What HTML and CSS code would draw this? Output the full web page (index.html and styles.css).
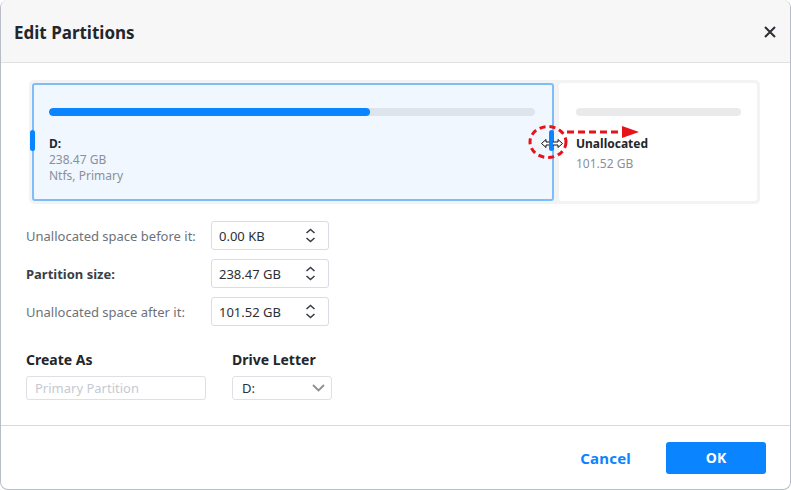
FILE: index.html
```html
<!DOCTYPE html>
<html>
  <head>
    <title>Edit Partitions</title>
    <link rel="stylesheet" href="styles.css">
  </head>
  <body>
    <div class="dialog">
      <div class="dlg-head">
        <h1 class="title">Edit Partitions</h1>
        <button class="close-btn">
          <svg width="12" height="12" viewBox="0 0 12 12"><path d="M1 1 L11 11 M11 1 L1 11" stroke="#2b2f36" stroke-width="2" fill="none"/></svg>
        </button>
      </div>
      <div class="dlg-body">
        <div class="disk-map">
          <div class="part selected">
            <span class="handle handle-left"></span>
            <div class="bar"><div class="fill" style="width:66%"></div></div>
            <div class="part-name">D:</div>
            <div class="part-info">238.47 GB</div>
            <div class="part-info">Ntfs, Primary</div>
            <span class="handle handle-right"></span>
          </div>
          <div class="part unalloc">
            <div class="bar"></div>
            <div class="part-name">Unallocated</div>
            <div class="part-info size-gap">101.52 GB</div>
          </div>
          <!-- drag hint over the right handle -->
          <svg class="drag-hint" width="120" height="38" viewBox="0 0 120 38">
            <ellipse cx="23" cy="19" rx="18" ry="15.5" fill="none" stroke="#e8121b" stroke-width="3" stroke-dasharray="6 4"/>
            <path d="M42 9 L99 9" stroke="#e8121b" stroke-width="3" stroke-dasharray="7 4" fill="none"/>
            <path d="M97 3 L114 9 L97 15 Z" fill="#e8121b"/>
            <path d="M16.5 20.5 L21 16.5 L21 19 L33 19 L33 16.5 L37.5 20.5 L33 24.5 L33 22 L21 22 L21 24.5 Z" fill="#fff" stroke="#111" stroke-width="1" stroke-linejoin="round"/>
            <rect x="24" y="18" width="4" height="7" rx="1" fill="#0a84ff"/>
          </svg>
        </div>

        <div class="size-form">
          <label class="field-label">Unallocated space before it:</label>
          <div class="spin-box"><span>0.00 KB</span><span class="spin"><svg width="11" height="15" viewBox="0 0 11 15"><path d="M1.5 5 L5.5 1.5 L9.5 5 M1.5 10 L5.5 13.5 L9.5 10" stroke="#3a3f47" stroke-width="1.6" fill="none"/></svg></span></div>
          <label class="field-label strong">Partition size:</label>
          <div class="spin-box"><span>238.47 GB</span><span class="spin"><svg width="11" height="15" viewBox="0 0 11 15"><path d="M1.5 5 L5.5 1.5 L9.5 5 M1.5 10 L5.5 13.5 L9.5 10" stroke="#3a3f47" stroke-width="1.6" fill="none"/></svg></span></div>
          <label class="field-label">Unallocated space after it:</label>
          <div class="spin-box"><span>101.52 GB</span><span class="spin"><svg width="11" height="15" viewBox="0 0 11 15"><path d="M1.5 5 L5.5 1.5 L9.5 5 M1.5 10 L5.5 13.5 L9.5 10" stroke="#3a3f47" stroke-width="1.6" fill="none"/></svg></span></div>
        </div>

        <div class="create-row">
          <div class="create-col">
            <div class="col-title">Create As</div>
            <div class="text-box placeholder">Primary Partition</div>
          </div>
          <div class="letter-col">
            <div class="col-title">Drive Letter</div>
            <div class="select-box"><span>D:</span><svg width="13" height="8" viewBox="0 0 13 8"><path d="M1 1 L6.5 6.5 L12 1" stroke="#8a9099" stroke-width="1.8" fill="none"/></svg></div>
          </div>
        </div>
      </div>
      <div class="dlg-foot">
        <button class="btn-link">Cancel</button>
        <button class="btn-primary">OK</button>
      </div>
    </div>
  </body>
</html>
```

FILE: styles.css
```css
html, body {
  margin: 0px;
  padding: 0px;
  background-color: #fff;
}
body {
  font-family: "Noto Sans", "Open Sans", sans-serif;
  color: #2b2f36;
}
.dialog {
  width: 791px;
  height: 490px;
  box-sizing: border-box;
  border: 1px solid #b9bdc5;
  border-top: 0px;
  border-radius: 8px;
  overflow: hidden;
  display: flex;
  flex-direction: column;
  background: #fff;
}
.dlg-head {
  height: 62px;
  background: #f7f7f7;
  border-bottom: 1px solid #dfe1e5;
  display: flex;
  align-items: center;
  padding: 0px 14px 0px 13px;
}
.title {
  flex: 1;
  margin: 0px;
  font-size: 17px;
  font-weight: 700;
  color: #23262b;
  padding-top: 2px;
}
.close-btn {
  border: 0px;
  background: none;
  padding: 0px;
  width: 12px;
  height: 12px;
  display: flex;
  cursor: pointer;
  margin-top: 2px;
}

.dlg-body {
  flex: 1;
  padding: 17px 0px 0px 25px;
}
.disk-map {
  position: relative;
  margin-left: 3px;
  width: 731px;
  box-sizing: border-box;
  display: flex;
  gap: 5px;
  padding: 3px;
  background: #f2f3f5;
  border-radius: 5px;
}
.part {
  position: relative;
  height: 118px;
  box-sizing: border-box;
  border-radius: 3px;
  font-size: 12px;
  line-height: 16px;
}
.part.selected {
  width: 522px;
  background: #f0f7ff;
  border: 2px solid #7fbdf6;
  padding: 23px 17px 0px 15px;
}
.part.unalloc {
  width: 198px;
  background: #fff;
  padding: 25px 16px 0px 17px;
}
.bar {
  height: 8px;
  border-radius: 4px;
  background: #dee4ec;
  margin-bottom: 20px;
  overflow: hidden;
}
.unalloc .bar {
  background: #e9eaec;
}
.fill {
  height: 100%;
  border-radius: 4px;
  background: #0a84ff;
}
.part-name {
  font-weight: 700;
  color: #23262b;
}
.part-info {
  color: #8a9099;
}
.size-gap {
  margin-top: 4px;
}
.handle {
  position: absolute;
  top: 45px;
  width: 5px;
  height: 21px;
  border-radius: 3px;
  background: #0a84ff;
}
.handle-left {
  left: -4px;
}
.handle-right {
  right: -2px;
}
.drag-hint {
  position: absolute;
  left: 496px;
  top: 43px;
}

.size-form {
  display: grid;
  grid-template-columns: 185px 118px;
  row-gap: 9px;
  margin-top: 17px;
  align-items: center;
}
.field-label {
  font-size: 13px;
  color: #6d727a;
}
.field-label.strong {
  font-weight: 700;
  color: #3a3e45;
}
.spin-box {
  height: 29px;
  box-sizing: border-box;
  border: 1px solid #d9dce2;
  border-radius: 3px;
  display: flex;
  align-items: center;
  padding: 0px 12px 0px 7px;
  font-size: 13px;
  color: #2b2f36;
}
.spin-box span:first-child {
  flex: 1;
}
.spin {
  display: flex;
}

.create-row {
  display: flex;
  margin-top: 25px;
}
.create-col {
  width: 206px;
}
.col-title {
  font-size: 14px;
  font-weight: 700;
  color: #23262b;
  line-height: 18px;
  margin-bottom: 7px;
}
.text-box, .select-box {
  height: 24px;
  box-sizing: border-box;
  border: 1px solid #dde0e5;
  border-radius: 3px;
  font-size: 13px;
  display: flex;
  align-items: center;
}
.text-box {
  width: 180px;
  padding-left: 8px;
}
.placeholder {
  color: #c5cad2;
}
.select-box {
  width: 100px;
  padding: 0px 6px 0px 9px;
  color: #2b2f36;
}
.select-box span {
  flex: 1;
}

.dlg-foot {
  height: 63px;
  border-top: 1px solid #d6d9de;
  display: flex;
  align-items: center;
  justify-content: flex-end;
  padding-right: 24px;
}
.btn-link {
  border: 0px;
  background: none;
  font-family: inherit;
  font-size: 15px;
  font-weight: 700;
  letter-spacing: 0.2px;
  color: #0a84ff;
  margin-right: 35px;
  padding: 0px;
  cursor: pointer;
}
.btn-primary {
  width: 100px;
  height: 32px;
  border: 0px;
  border-radius: 3px;
  background: #0a84ff;
  color: #fff;
  font-family: inherit;
  font-size: 14px;
  font-weight: 700;
  cursor: pointer;
}
```
